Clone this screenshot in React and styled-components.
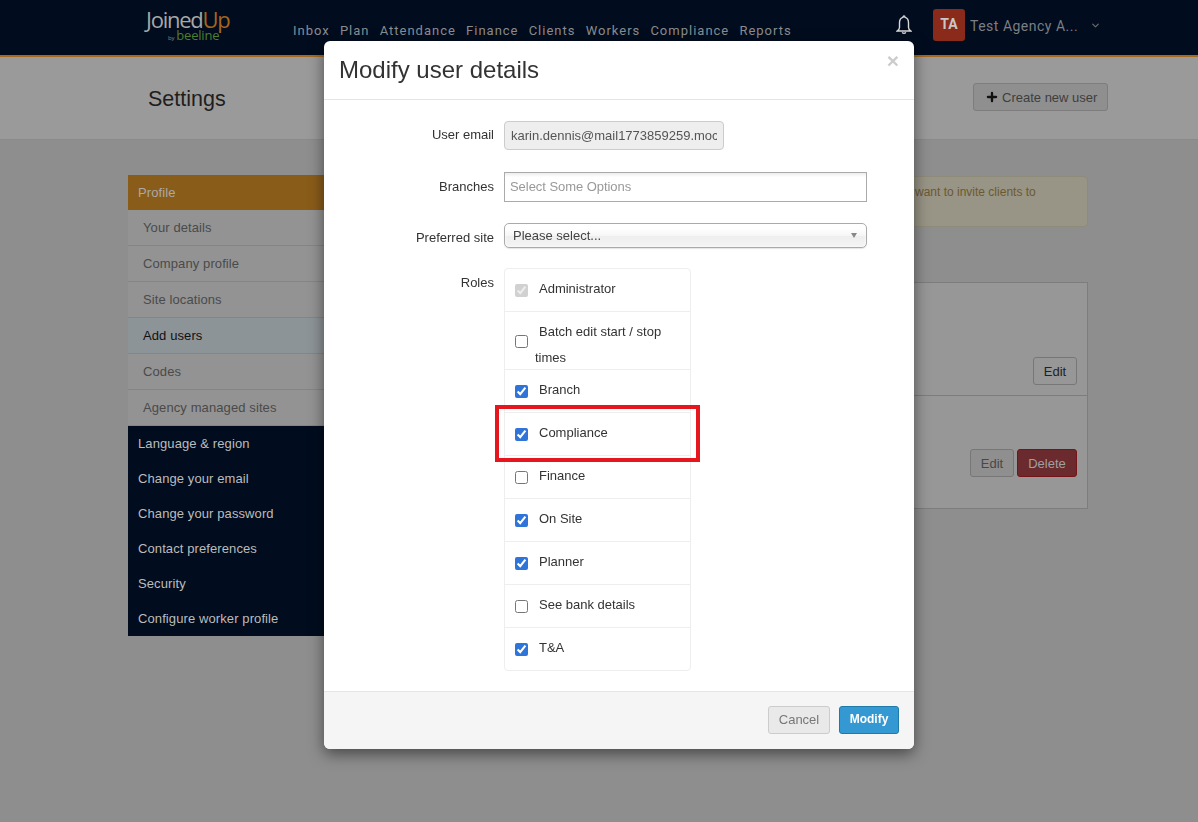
import React from 'react';
import styled, { createGlobalStyle } from 'styled-components';
import { ChevronDown, Plus } from 'lucide-react';

const GlobalStyle = createGlobalStyle`
  html, body {
    margin: 0;
    padding: 0;
    height: 100%;
    overflow: hidden;
    background: #8e8e8e;
    font-family: "Liberation Sans", Arial, sans-serif;
    font-size: 13px;
    color: #333;
  }
  * { box-sizing: border-box; }
`;

// top bar
const Navbar = styled.header`
  display: flex;
  height: 57px;
  padding-left: 146px;
  background: #010c1e;
  border-bottom: 2px solid #a56a1e;
`;

const Logo = styled.div`
  width: 147px;
  padding-top: 9px;
  font-family: "Open Sans", sans-serif;
`;

const LogoMain = styled.div`
  font-size: 22px;
  line-height: 20px;
  letter-spacing: -1.25px;
  color: #a8a8a8;
  span { color: #a5651f; }
`;

const LogoSub = styled.div`
  padding-left: 22px;
  font-size: 13px;
  line-height: 12px;
  letter-spacing: -0.2px;
  color: #4f7d2c;
  small { font-size: 6px; color: #888; margin-right: 2px; }
`;

const NavLinks = styled.nav`
  display: flex;
  gap: 10.15px;
  width: 600px;
  padding-top: 22px;
`;

const NavLink = styled.a`
  font-family: Roboto, sans-serif;
  font-size: 13px;
  line-height: 18px;
  letter-spacing: 1px;
  color: #8a8c90;
`;

const BellSlot = styled.div`
  width: 40px;
  padding: 15px 0 0 3px;
`;

const Avatar = styled.div`
  display: flex;
  align-items: center;
  justify-content: center;
  width: 32px;
  height: 32px;
  margin-top: 9px;
  padding-bottom: 2px;
  border-radius: 3px;
  background: #8a2a1a;
  color: #c8c8c8;
  font-family: Roboto, sans-serif;
  font-size: 14px;
  font-weight: 700;
`;

const AccountName = styled.div`
  width: 125px;
  padding: 17px 0 0 5px;
  font-family: Roboto, sans-serif;
  font-size: 14px;
  line-height: 18px;
  letter-spacing: 0.5px;
  color: #7b7e84;
`;

const AccountArrow = styled.div`
  padding-top: 19px;
  color: #666;
`;

// settings title band
const TitleBand = styled.div`
  display: flex;
  align-items: center;
  justify-content: space-between;
  height: 83px;
  padding: 0 90px 0 148px;
  background: #9a9a9a;
  border-bottom: 1px solid #8a8a8a;
`;

const PageTitle = styled.h1`
  margin: 2px 0 0;
  font-size: 21.5px;
  font-weight: 400;
  color: #1e1e1e;
`;

const CreateButton = styled.button`
  display: flex;
  align-items: center;
  gap: 3px;
  width: 135px;
  height: 28px;
  margin-bottom: 2px;
  padding: 0 0 0 11px;
  border: 1px solid #7d7d7d;
  border-radius: 3px;
  background: #8f8f8f;
  font: 13px "Liberation Sans", Arial, sans-serif;
  color: #3e3e3e;
  svg { color: #111; }
`;

const Content = styled.main`
  display: flex;
  gap: 20px;
  padding: 35px 110px 0 128px;
`;

const Sidebar = styled.aside`
  flex: 0 0 212px;
  letter-spacing: 0.1px;
`;

const SideHeader = styled.div`
  height: 35px;
  padding-left: 10px;
  line-height: 35px;
  background: #8a5c1a;
  color: #a9a9a9;
`;

const SideItem = styled.div`
  height: 36px;
  padding-left: 15px;
  line-height: 35px;
  border-bottom: 1px solid #858585;
  background: ${(p) => (p.$active ? '#8d9497' : '#939393')};
  color: ${(p) => (p.$active ? '#111' : '#4a4a4a')};
`;

const SideDark = styled.div`
  height: 35px;
  padding-left: 10px;
  line-height: 35px;
  background: #010c1e;
  color: #bcbcbc;
`;

const RightColumn = styled.div`
  flex: 1;
`;

const Alert = styled.div`
  height: 51px;
  padding: 6px 0 0 554px;
  margin-top: 1px;
  border: 1px solid #8f8b7a;
  border-radius: 4px;
  background: #989486;
  font-size: 12px;
  line-height: 18px;
  color: #6b5a30;
`;

const UserCard = styled.div`
  margin-top: 55px;
  border: 1px solid #7d7d7d;
  background: #979797;
`;

const UserRow = styled.div`
  display: flex;
  align-items: flex-end;
  justify-content: flex-end;
  gap: 3px;
  height: 112px;
  padding: 0 10px 10px 0;
  & + & {
    height: 113px;
    border-top: 1px solid #7d7d7d;
    padding-bottom: 31px;
  }
`;

const SmallButton = styled.button`
  height: 28px;
  width: ${(p) => p.$width}px;
  border: 1px solid ${(p) => (p.$danger ? '#741318' : '#777')};
  border-radius: 3px;
  background: ${(p) => (p.$danger ? '#6a2a2e' : p.$muted ? '#8f8f8f' : '#979797')};
  font: 13px "Liberation Sans", Arial, sans-serif;
  color: ${(p) => (p.$danger ? '#a0a0a0' : p.$muted ? '#484848' : '#222')};
`;

// modal
const ModalLayer = styled.div`
  position: fixed;
  inset: 0;
  padding: 41px 0 0 324px;
`;

const Modal = styled.section`
  width: 590px;
  height: 708px;
  display: flex;
  flex-direction: column;
  border-radius: 6px;
  background: #fff;
  box-shadow: 0 5px 15px rgba(0, 0, 0, 0.5);
`;

const ModalHeader = styled.div`
  display: flex;
  justify-content: space-between;
  height: 59px;
  padding: 13px 15px 0;
  border-bottom: 1px solid #e5e5e5;
`;

const ModalTitle = styled.h2`
  margin: 0;
  font-size: 24px;
  font-weight: 400;
  line-height: 32px;
  color: #333;
`;

const CloseButton = styled.span`
  font-size: 21px;
  font-weight: 700;
  line-height: 13px;
  color: #ccc;
`;

const ModalBody = styled.div`
  flex: 1;
  padding: 21px 15px 0;
`;

const FormRow = styled.div`
  display: flex;
  gap: 10px;
  margin-bottom: ${(p) => p.$gap}px;
`;

const FieldLabel = styled.label`
  flex: 0 0 155px;
  padding-top: ${(p) => p.$top || 5}px;
  text-align: right;
  line-height: 20px;
  color: #333;
`;

const EmailInput = styled.input`
  width: 220px;
  height: 29px;
  padding: 0 6px;
  border: 1px solid #ccc;
  border-radius: 4px;
  background: #eeeeee;
  font: 13px "Liberation Sans", Arial, sans-serif;
  color: #555;
  opacity: 1;
`;

const ChosenMulti = styled.div`
  width: 363px;
  height: 30px;
  padding-left: 5px;
  border: 1px solid #aaa;
  background: linear-gradient(#eeeeee 1%, #ffffff 15%);
  letter-spacing: -0.05px;
  line-height: 28px;
  color: #999;
`;

const ChosenSingle = styled.div`
  display: flex;
  align-items: center;
  justify-content: space-between;
  width: 363px;
  height: 25px;
  padding: 0 8px;
  border: 1px solid #aaa;
  border-radius: 5px;
  background: linear-gradient(#ffffff 20%, #f6f6f6 50%, #eeeeee 52%, #f4f4f4 100%);
  box-shadow: 0 0 3px #fff inset, 0 1px 1px rgba(0, 0, 0, 0.1);
  color: #444;
`;

const Caret = styled.span`
  width: 0;
  height: 0;
  margin-right: 1px;
  border-left: 3.5px solid transparent;
  border-right: 3.5px solid transparent;
  border-top: 5px solid #888;
`;

const RoleList = styled.div`
  width: 187px;
  border: 1px solid #eeeeee;
  border-radius: 4px;
`;

const RoleRow = styled.div`
  position: relative;
  display: flex;
  height: ${(p) => (p.$tall ? 58 : 43)}px;
  padding: 0 10px;
  border-top: 1px solid #eeeeee;
  &:first-child { border-top: 0; height: 42px; }
`;

const RoleCheck = styled.input`
  flex: none;
  align-self: center;
  width: 13px;
  height: 13px;
  margin: ${(p) => (p.$tall ? 2 : 0)}px 7px 0 0;
  accent-color: #2f74d9;
`;

const RoleText = styled.span`
  padding-top: 7px;
  text-indent: 4px;
  line-height: 26px;
  color: #333;
`;

const Highlight = styled.div`
  position: absolute;
  inset: -8px -10px -7px -10px;
  border: 4px solid #e5161d;
  pointer-events: none;
`;

const ModalFooter = styled.div`
  display: flex;
  justify-content: flex-end;
  gap: 9px;
  height: 58px;
  padding: 14px 15px;
  border-top: 1px solid #e5e5e5;
  border-radius: 0 0 6px 6px;
  background: #f5f5f5;
`;

const CancelButton = styled.button`
  width: 62px;
  height: 28px;
  padding: 0 0 2px;
  border: 1px solid #ccc;
  border-radius: 3px;
  background: #e9e9e9;
  font: 13px "Liberation Sans", Arial, sans-serif;
  color: #777;
`;

const ModifyButton = styled.button`
  width: 60px;
  height: 28px;
  padding: 0 0 2px;
  border: 1px solid #1f7aa8;
  border-radius: 3px;
  background: #3498d2;
  font: 700 12px "Liberation Sans", Arial, sans-serif;
  color: #fff;
`;

const navItems = ['Inbox', 'Plan', 'Attendance', 'Finance', 'Clients', 'Workers', 'Compliance', 'Reports'];
const sideItems = ['Your details', 'Company profile', 'Site locations', 'Add users', 'Codes', 'Agency managed sites'];
const sideDark = ['Language & region', 'Change your email', 'Change your password', 'Contact preferences', 'Security', 'Configure worker profile'];

const roles = [
  { name: 'Administrator', checked: true, disabled: true },
  { name: 'Batch edit start / stop times', tall: true },
  { name: 'Branch', checked: true },
  { name: 'Compliance', checked: true, marked: true },
  { name: 'Finance' },
  { name: 'On Site', checked: true },
  { name: 'Planner', checked: true },
  { name: 'See bank details' },
  { name: 'T&A', checked: true },
];

const BellIcon = () => (
  <svg width="16" height="20" viewBox="0 0 16 20" fill="none" stroke="#d8d8d8" strokeWidth="1.4">
    <path d="M8 1C8.7 1 9 1.6 9 2.4C11.5 3 12.5 5.2 12.5 7.8V12.5C12.5 14 13.5 15 14.8 16H1.2C2.5 15 3.5 14 3.5 12.5V7.8C3.5 5.2 4.5 3 7 2.4C7 1.6 7.3 1 8 1Z" />
    <path d="M6.3 17.2A1.8 1.8 0 0 0 9.7 17.2" />
  </svg>
);

const App = () => {
  return (
    <>
      <GlobalStyle />
      <Navbar>
        <Logo>
          <LogoMain>Joined<span>Up</span></LogoMain>
          <LogoSub><small>by</small>beeline</LogoSub>
        </Logo>
        <NavLinks>
          {navItems.map((item) => (
            <NavLink key={item}>{item}</NavLink>
          ))}
        </NavLinks>
        <BellSlot>
          <BellIcon />
        </BellSlot>
        <Avatar>TA</Avatar>
        <AccountName>Test Agency A...</AccountName>
        <AccountArrow>
          <ChevronDown size={11} strokeWidth={3} />
        </AccountArrow>
      </Navbar>
      <TitleBand>
        <PageTitle>Settings</PageTitle>
        <CreateButton>
          <Plus size={14} strokeWidth={4} />
          Create new user
        </CreateButton>
      </TitleBand>
      <Content>
        <Sidebar>
          <SideHeader>Profile</SideHeader>
          {sideItems.map((item) => (
            <SideItem key={item} $active={item === 'Add users'}>{item}</SideItem>
          ))}
          {sideDark.map((item) => (
            <SideDark key={item}>{item}</SideDark>
          ))}
        </Sidebar>
        <RightColumn>
          <Alert>want to invite clients to</Alert>
          <UserCard>
            <UserRow>
              <SmallButton $width={44}>Edit</SmallButton>
            </UserRow>
            <UserRow>
              <SmallButton $width={44} $muted>Edit</SmallButton>
              <SmallButton $width={60} $danger>Delete</SmallButton>
            </UserRow>
          </UserCard>
        </RightColumn>
      </Content>
      <ModalLayer>
        <Modal>
          <ModalHeader>
            <ModalTitle>Modify user details</ModalTitle>
            <CloseButton>×</CloseButton>
          </ModalHeader>
          <ModalBody>
            <FormRow $gap={22}>
              <FieldLabel $top={4}>User email</FieldLabel>
              <EmailInput disabled value="karin.dennis@mail1773859259.mock" readOnly />
            </FormRow>
            <FormRow $gap={21}>
              <FieldLabel>Branches</FieldLabel>
              <ChosenMulti>Select Some Options</ChosenMulti>
            </FormRow>
            <FormRow $gap={20}>
              <FieldLabel>Preferred site</FieldLabel>
              <ChosenSingle>
                Please select...
                <Caret />
              </ChosenSingle>
            </FormRow>
            <FormRow $gap={0}>
              <FieldLabel>Roles</FieldLabel>
              <RoleList>
                {roles.map((role) => (
                  <RoleRow key={role.name} $tall={role.tall}>
                    <RoleCheck type="checkbox" $tall={role.tall} checked={!!role.checked} disabled={role.disabled} readOnly />
                    <RoleText>{role.name}</RoleText>
                    {role.marked && <Highlight />}
                  </RoleRow>
                ))}
              </RoleList>
            </FormRow>
          </ModalBody>
          <ModalFooter>
            <CancelButton>Cancel</CancelButton>
            <ModifyButton>Modify</ModifyButton>
          </ModalFooter>
        </Modal>
      </ModalLayer>
    </>
  );
};

export default App;
